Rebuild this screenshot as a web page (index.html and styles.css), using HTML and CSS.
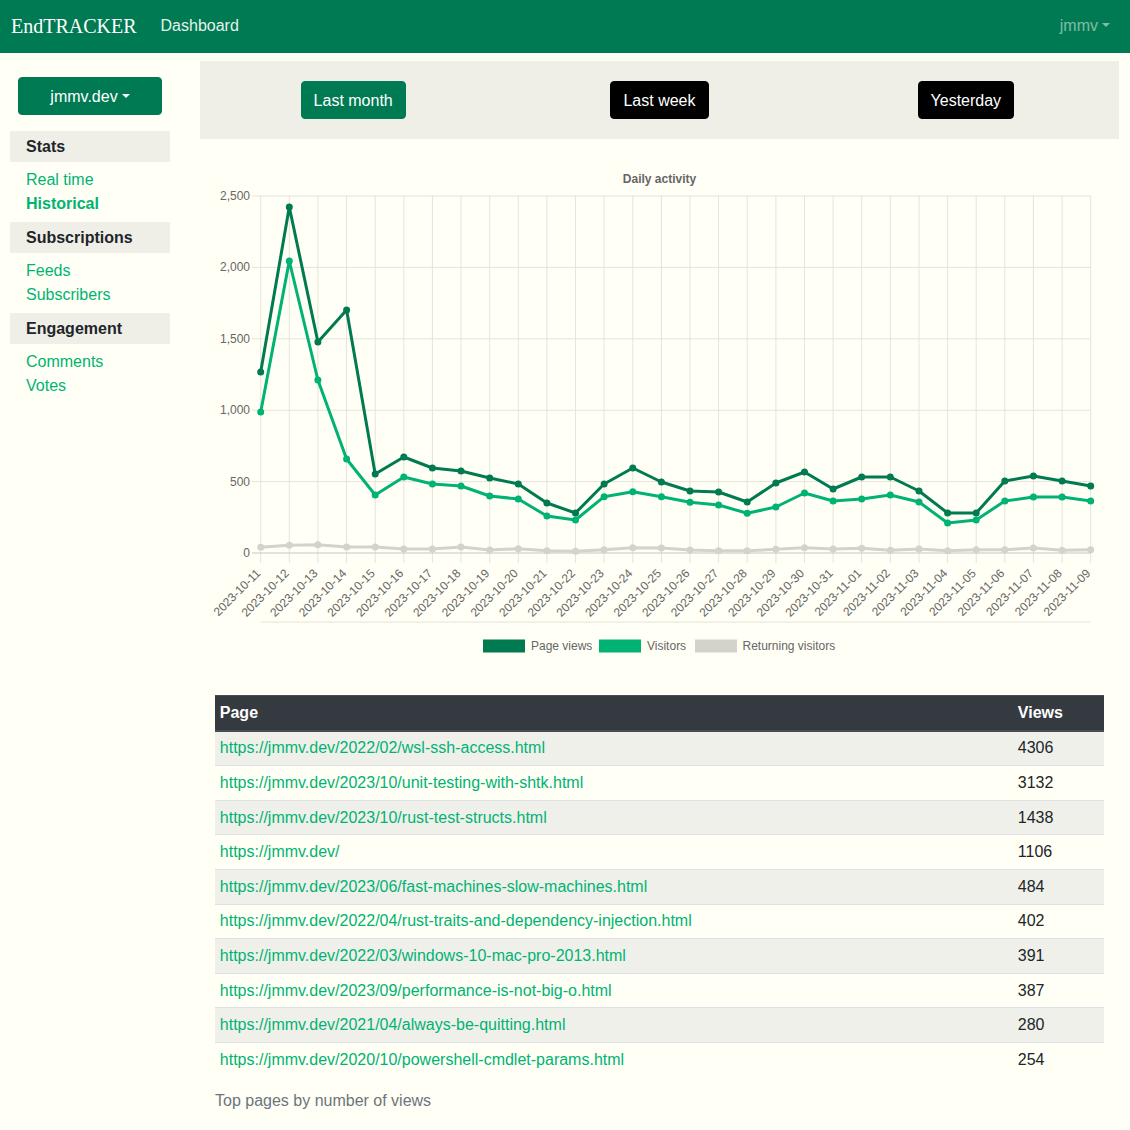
FILE: index.html
```html
<!DOCTYPE html>
<html lang="en">
<head>
<meta charset="utf-8">
<title>EndTRACKER</title>
<link rel="stylesheet" href="styles.css">
</head>
<body>
<nav class="navbar">
  <a class="brand" href="#">EndTRACKER</a>
  <a class="nav-link" href="#">Dashboard</a>
  <a class="nav-user dropdown-toggle" href="#">jmmv</a>
</nav>
<div class="layout">
  <aside class="sidebar">
    <button class="site-btn dropdown-toggle">jmmv.dev</button>
    <h6 class="side-head">Stats</h6>
    <ul class="side-list">
      <li><a href="#">Real time</a></li>
      <li><a href="#" class="active">Historical</a></li>
    </ul>
    <h6 class="side-head">Subscriptions</h6>
    <ul class="side-list">
      <li><a href="#">Feeds</a></li>
      <li><a href="#">Subscribers</a></li>
    </ul>
    <h6 class="side-head">Engagement</h6>
    <ul class="side-list">
      <li><a href="#">Comments</a></li>
      <li><a href="#">Votes</a></li>
    </ul>
  </aside>
  <main class="main">
    <div class="range-bar">
      <div class="range-col"><button class="btn btn-green">Last month</button></div>
      <div class="range-col"><button class="btn btn-black">Last week</button></div>
      <div class="range-col"><button class="btn btn-black">Yesterday</button></div>
    </div>
    <div class="content">
      <svg class="chart" width="889" height="520" viewBox="0 0 889 520">
        <defs>
          <marker id="mpv" markerWidth="8" markerHeight="8" refX="4" refY="4" markerUnits="userSpaceOnUse"><circle cx="4" cy="4" r="3.5" fill="#007a50"/></marker>
          <marker id="mvis" markerWidth="8" markerHeight="8" refX="4" refY="4" markerUnits="userSpaceOnUse"><circle cx="4" cy="4" r="3.5" fill="#00b374"/></marker>
          <marker id="mret" markerWidth="8" markerHeight="8" refX="4" refY="4" markerUnits="userSpaceOnUse"><circle cx="4" cy="4" r="3.5" fill="#d3d3cb"/></marker>
        </defs>
        <text class="chart-title" x="444.5" y="33">Daily activity</text>
        <g class="grid">
          <path d="M37 46H875.7M37 117.4H875.7M37 188.8H875.7M37 260.2H875.7M37 331.6H875.7"/>
          <path d="M45.7 46V413M74.3 46V413M102.9 46V413M131.6 46V413M160.2 46V413M188.8 46V413M217.4 46V413M246 46V413M274.7 46V413M303.3 46V413M331.9 46V413M360.5 46V413M389.1 46V413M417.8 46V413M446.4 46V413M475 46V413M503.6 46V413M532.2 46V413M560.9 46V413M589.5 46V413M618.1 46V413M646.7 46V413M675.3 46V413M704 46V413M732.6 46V413M761.2 46V413M789.8 46V413M818.4 46V413M847.1 46V413M875.7 46V413"/>
          <path d="M45.7 472H875.7"/>
        </g>
        <path class="zero" d="M37 403H875.7"/>
        <g class="ylabels">
          <text x="35" y="50">2,500</text>
          <text x="35" y="121.4">2,000</text>
          <text x="35" y="192.8">1,500</text>
          <text x="35" y="264.2">1,000</text>
          <text x="35" y="335.6">500</text>
          <text x="35" y="407">0</text>
        </g>
        <polyline class="line ret" points="45.7,397.3 74.3,395.3 102.9,394.7 131.6,397 160.2,397 188.8,399 217.4,399 246,397 274.7,400 303.3,398.7 331.9,400.7 360.5,401.3 389.1,399.7 417.8,397.7 446.4,398 475,400 503.6,400.7 532.2,400.7 560.9,399.3 589.5,397.7 618.1,399 646.7,398.3 675.3,400.3 704,399 732.6,400.7 761.2,399.7 789.8,399.7 818.4,398 847.1,400.3 875.7,399.7"/>
        <polyline class="line vis" points="45.7,262 74.3,111 102.9,230 131.6,309 160.2,345 188.8,327 217.4,334 246,336 274.7,346 303.3,349 331.9,366 360.5,370 389.1,346.7 417.8,341.7 446.4,346.7 475,352.3 503.6,355 532.2,363.3 560.9,357 589.5,343 618.1,351 646.7,349 675.3,345 704,352 732.6,373 761.2,370 789.8,351 818.4,347 847.1,347 875.7,351"/>
        <polyline class="line pv" points="45.7,222 74.3,57 102.9,192 131.6,160 160.2,324 188.8,307 217.4,318 246,321 274.7,328 303.3,334 331.9,353 360.5,363 389.1,334 417.8,318 446.4,332 475,341 503.6,342 532.2,352 560.9,333 589.5,322 618.1,339 646.7,327 675.3,327 704,341 732.6,363 761.2,363 789.8,331 818.4,326 847.1,331 875.7,336"/>
        <g class="xlabels">
          <text transform="translate(46.2 424) rotate(-45)">2023-10-11</text>
          <text transform="translate(74.8 424) rotate(-45)">2023-10-12</text>
          <text transform="translate(103.4 424) rotate(-45)">2023-10-13</text>
          <text transform="translate(132.1 424) rotate(-45)">2023-10-14</text>
          <text transform="translate(160.7 424) rotate(-45)">2023-10-15</text>
          <text transform="translate(189.3 424) rotate(-45)">2023-10-16</text>
          <text transform="translate(217.9 424) rotate(-45)">2023-10-17</text>
          <text transform="translate(246.5 424) rotate(-45)">2023-10-18</text>
          <text transform="translate(275.2 424) rotate(-45)">2023-10-19</text>
          <text transform="translate(303.8 424) rotate(-45)">2023-10-20</text>
          <text transform="translate(332.4 424) rotate(-45)">2023-10-21</text>
          <text transform="translate(361 424) rotate(-45)">2023-10-22</text>
          <text transform="translate(389.6 424) rotate(-45)">2023-10-23</text>
          <text transform="translate(418.3 424) rotate(-45)">2023-10-24</text>
          <text transform="translate(446.9 424) rotate(-45)">2023-10-25</text>
          <text transform="translate(475.5 424) rotate(-45)">2023-10-26</text>
          <text transform="translate(504.1 424) rotate(-45)">2023-10-27</text>
          <text transform="translate(532.7 424) rotate(-45)">2023-10-28</text>
          <text transform="translate(561.4 424) rotate(-45)">2023-10-29</text>
          <text transform="translate(590 424) rotate(-45)">2023-10-30</text>
          <text transform="translate(618.6 424) rotate(-45)">2023-10-31</text>
          <text transform="translate(647.2 424) rotate(-45)">2023-11-01</text>
          <text transform="translate(675.8 424) rotate(-45)">2023-11-02</text>
          <text transform="translate(704.5 424) rotate(-45)">2023-11-03</text>
          <text transform="translate(733.1 424) rotate(-45)">2023-11-04</text>
          <text transform="translate(761.7 424) rotate(-45)">2023-11-05</text>
          <text transform="translate(790.3 424) rotate(-45)">2023-11-06</text>
          <text transform="translate(818.9 424) rotate(-45)">2023-11-07</text>
          <text transform="translate(847.6 424) rotate(-45)">2023-11-08</text>
          <text transform="translate(876.2 424) rotate(-45)">2023-11-09</text>
        </g>
        <g class="legend">
          <rect x="268" y="489.5" width="42" height="13" fill="#007a50"/>
          <text x="316" y="500">Page views</text>
          <rect x="384" y="489.5" width="42" height="13" fill="#00b374"/>
          <text x="432" y="500">Visitors</text>
          <rect x="480" y="489.5" width="42" height="13" fill="#d3d3cb"/>
          <text x="527.5" y="500">Returning visitors</text>
        </g>
      </svg>
      <table class="pages">
        <caption>Top pages by number of views</caption>
        <thead>
          <tr><th>Page</th><th class="views">Views</th></tr>
        </thead>
        <tbody>
          <tr><td><a href="#">https://jmmv.dev/2022/02/wsl-ssh-access.html</a></td><td>4306</td></tr>
          <tr><td><a href="#">https://jmmv.dev/2023/10/unit-testing-with-shtk.html</a></td><td>3132</td></tr>
          <tr><td><a href="#">https://jmmv.dev/2023/10/rust-test-structs.html</a></td><td>1438</td></tr>
          <tr><td><a href="#">https://jmmv.dev/</a></td><td>1106</td></tr>
          <tr><td><a href="#">https://jmmv.dev/2023/06/fast-machines-slow-machines.html</a></td><td>484</td></tr>
          <tr><td><a href="#">https://jmmv.dev/2022/04/rust-traits-and-dependency-injection.html</a></td><td>402</td></tr>
          <tr><td><a href="#">https://jmmv.dev/2022/03/windows-10-mac-pro-2013.html</a></td><td>391</td></tr>
          <tr><td><a href="#">https://jmmv.dev/2023/09/performance-is-not-big-o.html</a></td><td>387</td></tr>
          <tr><td><a href="#">https://jmmv.dev/2021/04/always-be-quitting.html</a></td><td>280</td></tr>
          <tr><td><a href="#">https://jmmv.dev/2020/10/powershell-cmdlet-params.html</a></td><td>254</td></tr>
        </tbody>
      </table>
    </div>
  </main>
</div>
</body>
</html>
```

FILE: styles.css
```css
* { box-sizing: border-box; }
html, body { margin: 0; padding: 0; }
body {
  font-family: "Liberation Sans", Arial, sans-serif;
  font-size: 16px;
  line-height: 1.5;
  color: #212529;
  background: #fffff5;
}
a { text-decoration: none; color: #00b374; }

.navbar {
  height: 53px;
  background: #007a52;
  display: flex;
  align-items: center;
  padding: 0 20px 2px 11px;
}
.brand {
  font-family: "Liberation Serif", "Times New Roman", serif;
  font-size: 20px;
  color: #fff;
  margin-right: 24px;
  line-height: 30px;
}
.nav-link {
  color: rgba(255, 255, 255, 0.92);
  font-size: 16px;
}
.nav-user {
  margin-left: auto;
  color: rgba(255, 255, 255, 0.5);
}
.dropdown-toggle::after {
  content: "";
  display: inline-block;
  margin-left: 4px;
  vertical-align: 4px;
  border-top: 4.8px solid currentColor;
  border-left: 4.8px solid transparent;
  border-right: 4.8px solid transparent;
}

.layout {
  display: flex;
  padding: 0 11px 0 10px;
}
.sidebar {
  width: 160px;
  flex: none;
  padding-top: 24px;
}
.site-btn {
  display: block;
  width: 144px;
  height: 38px;
  margin: 0 8px 16px;
  background: #007a52;
  color: #fff;
  border: 1px solid #007a52;
  border-radius: 4px;
  font-family: inherit;
  font-size: 16px;
  line-height: 24px;
  padding: 7px 12px 5px;
}
.side-head {
  margin: 0;
  height: 31px;
  line-height: 31px;
  padding: 0 16px;
  background: #efefe8;
  font-size: 16px;
  font-weight: 700;
  color: #212529;
}
.side-list {
  list-style: none;
  margin: 0;
  padding: 6px 16px 6px;
}
.side-list li { line-height: 24px; }
.side-list a.active { font-weight: 700; }

.main {
  flex: 1;
  margin-left: 30px;
  padding-top: 8px;
}
.range-bar {
  display: flex;
  background: #efefe8;
  padding: 20px 0;
}
.range-col {
  flex: 1;
  display: flex;
  justify-content: center;
}
.btn {
  font-family: inherit;
  font-size: 16px;
  line-height: 24px;
  padding: 7px 12px 5px;
  border-radius: 4px;
  color: #fff;
  cursor: pointer;
}
.btn-green { background: #007a52; border: 1px solid #007a52; }
.btn-black { background: #000; border: 1px solid #000; }

.content { padding: 11px 15px 0; }
.chart { display: block; overflow: visible; }
.chart text { font-family: "Liberation Sans", Arial, sans-serif; font-size: 12px; fill: #666; }
.chart .chart-title { font-weight: 700; text-anchor: middle; }
.grid path { stroke: #e4e4dc; stroke-width: 1; fill: none; }
.zero { stroke: #c6c6be; stroke-width: 1; fill: none; }
.ylabels text { text-anchor: end; }
.xlabels text { text-anchor: end; }
.line { fill: none; stroke-width: 3; stroke-linejoin: round; }
.line.pv { stroke: #007a50; marker-start: url(#mpv); marker-mid: url(#mpv); marker-end: url(#mpv); }
.line.vis { stroke: #00b374; marker-start: url(#mvis); marker-mid: url(#mvis); marker-end: url(#mvis); }
.line.ret { stroke: #d3d3cb; marker-start: url(#mret); marker-mid: url(#mret); marker-end: url(#mret); }

.pages {
  width: 100%;
  margin-top: 25px;
  border-collapse: collapse;
  caption-side: bottom;
}
.pages caption {
  text-align: left;
  color: #6c757d;
  padding: 12px 0;
}
.pages th, .pages td {
  padding: 4.8px;
  text-align: left;
  vertical-align: top;
  border-top: 1px solid #dee2e6;
}
.pages thead th {
  background: #343a40;
  color: #fff;
  font-weight: 700;
  border-top-color: #454d55;
  border-bottom: 2px solid #454d55;
}
.pages th.views { width: 91px; }
.pages tbody tr:nth-child(odd) { background: #f0f0ea; }
```
